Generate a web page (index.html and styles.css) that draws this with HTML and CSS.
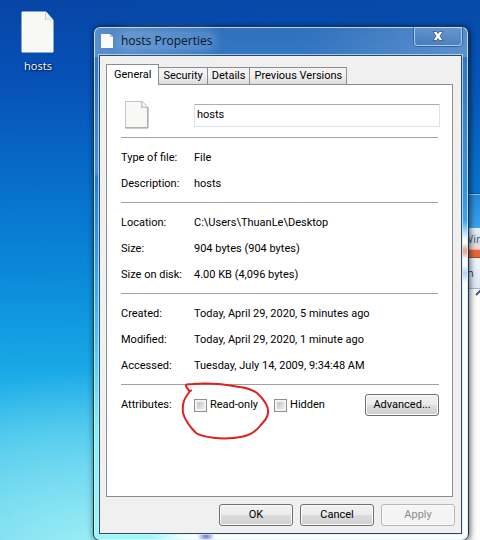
FILE: index.html
```html
<!DOCTYPE html>
<html lang="en">
<head>
<meta charset="utf-8">
<meta name="viewport" content="width=device-width, initial-scale=1">
<title>hosts Properties</title>
<link rel="stylesheet" href="styles.css">
</head>
<body>
<main class="desktop">
  <a class="shortcut" href="#dialog">
    <svg class="shortcut-icon" width="34" height="42" viewBox="0 0 34 42" aria-hidden="true">
      <path d="M1 1H25L32 9V41H1Z" fill="#f8f8f6" stroke="#fff"/>
      <path d="M24 1V9H32Z" fill="#c9d0d2"/>
      <path d="M25 2V8.500H31Z" fill="#eef1f1"/>
    </svg>
    <span>hosts</span>
  </a>

  <section class="back-window" aria-label="Background window">
    <div class="back-glass"></div>
    <div class="back-title">Win</div>
    <div class="back-accent"></div>
    <div class="back-toolbar">n</div>
    <div class="back-body">
      <svg width="12" height="8" viewBox="0 0 12 8" aria-hidden="true"><path d="M1 6L6 1L11 6" fill="none" stroke="#4a5a78" stroke-width="2"/></svg>
    </div>
  </section>

  <section class="dialog" id="dialog" role="dialog" aria-labelledby="dialog-title">
    <header class="titlebar">
      <svg width="12" height="14" viewBox="0 0 12 14" aria-hidden="true">
        <path d="M0 0H9L12 3V14H0Z" fill="#fbfbfa"/><path d="M9 0V3H12Z" fill="#b9c4cc"/>
      </svg>
      <h1 id="dialog-title"><span>hosts Properties</span></h1>
      <button class="close" type="button" aria-label="Close">
        <svg width="12" height="10" viewBox="0 0 12 10" aria-hidden="true">
          <path d="M1 .5H4.500L6 2.500L7.500 .5H11L8 5L11 9.500H7.500L6 7.500L4.500 9.500H1L4 5Z" fill="#fff" stroke="#3c4f6c" stroke-width=".8"/>
        </svg>
      </button>
    </header>

    <form class="client">
      <div class="tabs" role="tablist">
        <button class="tab active" type="button" role="tab" aria-selected="true">General</button>
        <button class="tab" type="button" role="tab" aria-selected="false">Security</button>
        <button class="tab" type="button" role="tab" aria-selected="false">Details</button>
        <button class="tab" type="button" role="tab" aria-selected="false">Previous Versions</button>
      </div>
      <div class="panel" role="tabpanel">
        <div class="name-row">
          <svg width="26" height="28" viewBox="0 0 26 28" aria-hidden="true">
            <path d="M1.500 .5H18.500L23.500 6V26.500H1.500Z" fill="#f8f8f6" stroke="#c4c4c2"/>
            <path d="M1 27H24V6" fill="none" stroke="#9c9c9a"/>
            <path d="M17 1C18.500 3 18 5 17.500 6.500C20 5.500 22 6 23.500 7" fill="#fff" stroke="#a8a8a6"/>
          </svg>
          <input class="name" type="text" value="hosts" aria-label="File name">
        </div>
        <dl class="group">
          <dt>Type of file:</dt><dd>File</dd>
          <dt>Description:</dt><dd>hosts</dd>
        </dl>
        <dl class="group">
          <dt>Location:</dt><dd>C:\Users\ThuanLe\Desktop</dd>
          <dt>Size:</dt><dd>904 bytes (904 bytes)</dd>
          <dt>Size on disk:</dt><dd>4.00 KB (4,096 bytes)</dd>
        </dl>
        <dl class="group">
          <dt>Created:</dt><dd>Today, April 29, 2020, 5 minutes ago</dd>
          <dt>Modified:</dt><dd>Today, April 29, 2020, 1 minute ago</dd>
          <dt>Accessed:</dt><dd>Tuesday, July 14, 2009, 9:34:48 AM</dd>
        </dl>
        <div class="group attributes">
          <span>Attributes:</span>
          <div class="options">
            <label class="check marked"><input type="checkbox">Read-only
              <svg class="marker" width="92" height="62" viewBox="180 380 92 62" aria-hidden="true">
                <path d="M191 390.500C188 392 189 389 187 388C184 384 188 384 193 384C213 382 229 385 240 387C247 388 253 390 257 393C264 399 269 407 268 413C267 420 263 422 260 426C253 435 244 437 233 438C222 439 204 438 196 433C191 428 185 420 183 413C182 403 184 399 190 391" fill="none" stroke="#e0201c" stroke-width="2" stroke-linecap="round"/>
              </svg>
            </label>
            <label class="check"><input type="checkbox">Hidden</label>
            <button class="btn advanced" type="button">Advanced...</button>
          </div>
        </div>
      </div>
      <footer class="actions">
        <button class="btn" type="button">OK</button>
        <button class="btn" type="button">Cancel</button>
        <button class="btn" type="button" disabled>Apply</button>
      </footer>
    </form>
  </section>
</main>
</body>
</html>
```
FILE: styles.css
```css
* { box-sizing: border-box; }

body {
  margin: 0;
  font: 11px/16px Roboto, "Liberation Sans", sans-serif;
  color: #000;
}

button, input { font: inherit; color: inherit; margin: 0; }

.desktop {
  position: relative;
  min-height: 100vh;
  overflow: hidden;
  background:
    radial-gradient(ellipse 260px 190px at 90px 560px, rgba(170, 245, 248, .85), rgba(120, 230, 248, 0)),
    linear-gradient(100deg, rgba(0, 40, 150, .1), rgba(0, 90, 170, .15)),
    linear-gradient(#0848a8 0, #0757bd 90px, #0878d2 190px, #0c96e2 280px, #1cb8f0 370px, #40d0f4 440px, #66def6 540px);
}

.shortcut {
  position: absolute;
  left: 8px;
  top: 11px;
  width: 60px;
  display: flex;
  flex-direction: column;
  align-items: center;
  gap: 5px;
  color: #fff;
  font-family: "Open Sans", sans-serif;
  font-size: 11px;
  text-decoration: none;
  text-shadow: 1px 1px 2px #001840, 0 0 2px #001840;
}

.back-window {
  position: absolute;
  left: 380px;
  right: 0;
  top: 194px;
  bottom: 0;
  display: flex;
  flex-direction: column;
  padding-left: 83px;
  border-top: 1px solid #8cc8f4;
  outline: 1px solid #10559a;
  background: #fff;
  font-family: "Open Sans", sans-serif;
}
.back-glass { height: 33px; margin-left: -83px; background: linear-gradient(#2488d8, #38a4f0); }
.back-title { height: 21px; line-height: 21px; background: linear-gradient(#e8f2fa, #cfdfea 60%, #f8d8cc); color: #465c74; }
.back-accent { height: 9px; background: #e4683c; border-top: 1px solid #f4b49c; border-bottom: 1px solid #a84c30; }
.back-toolbar { height: 31px; line-height: 30px; padding-left: 4px; background: linear-gradient(#f2f7fd, #dce8f6); border-bottom: 1px solid #a8b8cc; color: #2c3c60; }
.back-body { flex: 1; padding-left: 12px; background: #fdfdfd; }
.back-body svg { display: block; }

.dialog {
  position: absolute;
  left: 93px;
  right: 11px;
  top: 26px;
  padding: 0 6px 6px 5px;
  border: 1px solid #173454;
  border-radius: 7px;
  background:
    linear-gradient(100deg, rgba(255, 255, 255, .2), transparent 30%, transparent 55%, rgba(255, 255, 255, .2)) 0 0 / 100% 30px no-repeat,
    radial-gradient(ellipse 9px 7px at 112px 509px, #6c78c8, transparent),
    linear-gradient(90deg, #9af8f8 15%, #fff 25%) 0 100% / 100% 6px no-repeat,
    linear-gradient(transparent 216px, rgba(228, 120, 90, .6) 222px, rgba(228, 120, 90, .6) 226px, transparent 232px, transparent 238px, rgba(110, 165, 230, .5) 246px, transparent 256px) 100% 0 / 8px 100% no-repeat,
    linear-gradient(#3070bc 0, #3f8cd6 120px, #2f94e0 160px, #3fa4ec 194px, #fff 212px) 100% 0 / 78% 100% no-repeat,
    linear-gradient(#3070bc 0, #4690dc 145px, #2280d0 150px, #34a4ec 240px, #50ccfa 330px, #80f4f4 400px, #9af8f8 100%);
  box-shadow: inset 0 0 0 1px rgba(220, 245, 255, .75), 1px 1px 6px rgba(0, 0, 0, .65);
}

.titlebar { display: flex; align-items: center; gap: 8px; height: 28px; padding-left: 2px; }
.titlebar h1 {
  flex: 1;
  margin: 0;
  font: 12px/16px "Open Sans", sans-serif;
  color: #0a1426;
}
.titlebar h1 span {
  border-radius: 8px;
  background: rgba(190, 215, 245, .22);
  box-shadow: 0 0 8px 4px rgba(190, 215, 245, .22);
}
.close {
  align-self: flex-start;
  display: flex;
  align-items: center;
  justify-content: center;
  width: 48px;
  height: 19px;
  padding: 0;
  border: 1px solid #a8cdf0;
  border-top: 0;
  border-radius: 0 0 4px 4px;
  background: linear-gradient(rgba(255, 255, 255, .12), rgba(0, 40, 110, .12));
  box-shadow: 0 0 0 1px rgba(15, 60, 115, .5);
}

.client {
  padding: 8px 6px 7px 6px;
  border: 1px solid #34485c;
  box-shadow: 0 0 0 1px rgba(210, 238, 255, .7);
  background: #f0f0f0;
}

.tabs { display: flex; align-items: flex-end; height: 20px; }
.tab {
  height: 17px;
  padding: 0 4px;
  border: 1px solid #8a8e94;
  border-left-width: 0;
  border-bottom: 0;
  background: linear-gradient(#f3f3f3 45%, #dcdcdc);
  white-space: nowrap;
}
.tab.active {
  position: relative;
  height: 21px;
  margin-bottom: -1px;
  padding: 0 7px;
  border-left-width: 1px;
  background: #fff;
}

.panel { min-height: 413px; margin-right: 2px; padding: 20px 12px 0 14px; border: 1px solid #8a8e94; background: #fff; }
.name-row { display: flex; align-items: flex-start; padding-left: 3px; height: 33px; margin-top: -1px; }
.name-row svg { flex: none; margin-right: 44px; margin-top: -3px; }
.name {
  flex: 1;
  min-width: 0;
  height: 23px;
  padding: 0 2px 2px;
  border: 1px solid #dfe3e8;
  border-top-color: #abadb3;
  background: #fff;
}

.group {
  display: grid;
  grid-template-columns: 73px 1fr;
  grid-auto-rows: 26px;
  align-items: center;
  margin: 0 2px 0 0;
  padding: 7px 0 5px;
  border-top: 1px solid #a0a0a0;
}
.group dd { margin: 0; white-space: nowrap; }
.attributes { margin-right: 1px; }

.options { display: flex; align-items: center; gap: 16px; }
.check { display: flex; align-items: center; gap: 3px; white-space: nowrap; }
.check input {
  appearance: none;
  width: 13px;
  height: 13px;
  border: 1px solid #8e8f8f;
  background: linear-gradient(135deg, #b4bac2, #f6f6f6);
  box-shadow: inset 0 0 0 2px #f4f4f4;
}
.marked { position: relative; }
.marker { position: absolute; left: -14px; top: -17px; pointer-events: none; }

.btn {
  width: 74px;
  height: 22px;
  padding: 0;
  border: 1px solid #707070;
  border-radius: 3px;
  background: linear-gradient(#f2f2f2, #ebebeb 50%, #dddddd 50%, #cfcfcf);
  box-shadow: inset 0 0 0 1px #fbfbfb;
}
.btn:disabled { border-color: #b4b7ba; background: #f4f4f4; color: #8c8c8c; }
.advanced { margin-left: auto; }

.actions { display: flex; justify-content: flex-end; gap: 7px; padding-top: 7px; }
```
